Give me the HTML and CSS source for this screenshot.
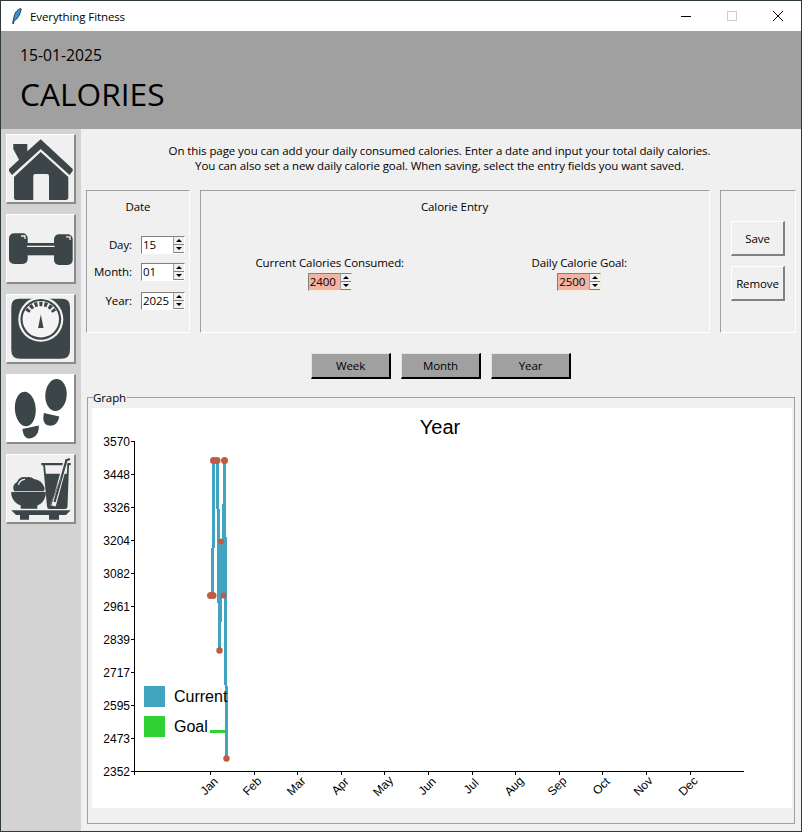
FILE: index.html
```html
<!DOCTYPE html>
<html lang="en">
<head>
<meta charset="utf-8">
<title>Everything Fitness</title>
<link rel="stylesheet" href="styles.css">
</head>
<body>
<div class="window">
  <div class="titlebar">
    <svg class="feather" viewBox="0 0 10 16"><path d="M8.8 0.5C5 1.5 2.5 5 1.8 10L1.2 12.5 0.6 15.6 1.400 15.700 2.200 12.600C5.500 11.500 7.800 7 9.300 1Z" fill="#3c8fd6" stroke="#0c2238" stroke-width="0.8"/></svg>
    <span class="app-name">Everything Fitness</span>
    <div class="controls">
      <svg class="ctl" viewBox="0 0 46 30"><path d="M18 15.500H28" stroke="#000"/></svg>
      <svg class="ctl" viewBox="0 0 46 30"><rect x="18.500" y="10.500" width="9" height="9" fill="none" stroke="#ccc"/></svg>
      <svg class="ctl" viewBox="0 0 46 30"><path d="M18 10L28 20M28 10L18 20" stroke="#000"/></svg>
    </div>
  </div>
  <header class="header">
    <div class="date">15-01-2025</div>
    <h1 class="heading">CALORIES</h1>
  </header>
  <div class="body">
    <nav class="sidebar">
      <button class="nav-btn"><svg viewBox="0 0 70 70"><path class="ic" d="M34.700 5.300 66.700 35V37L63.500 41 34.700 15 6 41 3 37V35L13 25.800 7.300 15V10H21.300V17.300Z"/><path class="ic" d="M34.700 18 62.300 43V64Q62 66 60 66H43V42Q43 40 41 40H29Q27.300 40 27.300 42V66H10Q8 66 8 64V43Z"/></svg></button>
      <button class="nav-btn"><svg viewBox="0 0 70 70"><rect class="ic" x="3" y="19.300" width="18.700" height="30.700" rx="5"/><rect class="ic" x="48" y="20.300" width="18.700" height="30.700" rx="5"/><rect class="ic" x="20" y="29" width="30" height="12.300"/><path class="hl" d="M21 32.300H48.500M15 22H19V25M60 22.800H64V26"/></svg></button>
      <button class="nav-btn"><svg viewBox="0 0 70 70"><path class="ic" d="M13 4.700H56Q64 4.700 64 12.700V56Q64 64.700 55 64.700H14Q5.300 64.700 5.300 56V12.700Q5.300 4.700 13 4.700Z"/><circle cx="34.800" cy="25.300" r="22.500" fill="#f4f4f4"/><circle cx="34.800" cy="25.300" r="20.400" class="ic"/><circle cx="34.800" cy="25.300" r="18.200" fill="#f4f4f4"/><path d="M21.400 17.600A15.500 15.500 0 0 1 48.200 17.600" fill="none" stroke="#3c4547" stroke-width="4.500" stroke-dasharray="3 1.900"/><path class="ic" d="M34.800 20.500 37.500 34H32.100Z"/></svg></button>
      <button class="nav-btn nav-white"><svg viewBox="0 0 70 70"><ellipse class="ic" cx="19.300" cy="35" rx="10.400" ry="17.300" transform="rotate(-4 19.300 35)"/><path class="ic" d="M16.300 55 32.800 51.400Q33.500 60 27 63.500 20 66.500 17.500 60Z"/><ellipse class="ic" cx="50" cy="21" rx="10.700" ry="16" transform="rotate(4 50 21)"/><path class="ic" d="M37.800 39 53.300 42.500Q52 51 45 51.800 37 51.500 37.300 44Z"/></svg></button>
      <button class="nav-btn"><svg viewBox="0 0 70 70"><path class="ic" d="M5.300 56.300H64.700L60 61H53V65.700H43V61H23V65.700H14V61H10Z"/><path class="ic" d="M5.300 38H39.700V41Q38 49 31.300 51.500V54.700H14.700V51.500Q7.500 49 5.300 41Z"/><path class="ic" d="M8 37.300Q5.500 31 11 28 13.500 22 20.500 23.300 25 22.500 28 25 36 26 38.700 34L38 37.300Z"/><path class="hl" d="M12.500 31Q13.500 25.500 19 25.300"/><path class="ic" d="M35.300 9H64.700V11.300H63L61.500 52.500Q61.300 55 59 55H43.500Q41.300 55 41 52.500L37.200 11.300H35.300Z"/><path d="M39 11.300H61.300L60.900 19.700H39.800Z" fill="#f0f0f0"/><path d="M59.500 8 47.500 52" stroke="#f0f0f0" stroke-width="4.500" fill="none"/><path d="M60.500 6 48.500 48" stroke="#3c4547" stroke-width="2.200" fill="none"/><path d="M59.500 6.500 64 5" stroke="#3c4547" stroke-width="2" fill="none"/><path d="M55 24 44 52" stroke="#6d7577" stroke-width="1" fill="none"/></svg></button>
    </nav>
    <main class="main">
      <p class="intro">On this page you can add your daily consumed calories. Enter a date and input your total daily calories.<br>You can also set a new daily calorie goal. When saving, select the entry fields you want saved.</p>
      <section class="frames">
        <div class="frame date-frame">
          <div class="frame-title">Date</div>
          <div class="date-rows">
            <div class="date-row"><span class="lbl">Day:</span><div class="spin"><span class="val">15</span><span class="arrows"><i class="up"></i><i class="down"></i></span></div></div>
            <div class="date-row"><span class="lbl">Month:</span><div class="spin"><span class="val">01</span><span class="arrows"><i class="up"></i><i class="down"></i></span></div></div>
            <div class="date-row row-year"><span class="lbl">Year:</span><div class="spin"><span class="val">2025</span><span class="arrows"><i class="up"></i><i class="down"></i></span></div></div>
          </div>
        </div>
        <div class="frame entry-frame">
          <div class="frame-title">Calorie Entry</div>
          <div class="entry-grid">
            <div class="entry-col"><span class="lbl">Current Calories Consumed:</span><div class="spin spin-red"><span class="val">2400</span><span class="arrows"><i class="up"></i><i class="down"></i></span></div></div>
            <div class="entry-col"><span class="lbl">Daily Calorie Goal:</span><div class="spin spin-red"><span class="val">2500</span><span class="arrows"><i class="up"></i><i class="down"></i></span></div></div>
          </div>
        </div>
        <div class="frame action-frame">
          <button class="act-btn">Save</button>
          <button class="act-btn">Remove</button>
        </div>
      </section>
      <div class="ranges">
        <button class="range-btn">Week</button>
        <button class="range-btn">Month</button>
        <button class="range-btn">Year</button>
      </div>
      <section class="graph">
        <span class="graph-label">Graph</span>
        <svg class="chart" viewBox="92 408 700 400" width="700" height="400">
          <text class="ct-title" x="440" y="433.500" text-anchor="middle">Year</text>
          <path class="axis" d="M134.500 441V775M131 771.500H744"/>
          <path class="axis" d="M131 441.500H134M131 474.500H134M131 507.500H134M131 540.500H134M131 573.500H134M131 606.500H134M131 639.500H134M131 672.500H134M131 705.500H134M131 738.500H134M210.500 771V775M254.500 771V775M297.500 771V775M341.500 771V775M384.500 771V775M428.500 771V775M472.500 771V775M515.500 771V775M559.500 771V775M602.500 771V775M646.500 771V775M690.500 771V775"/>
          <g class="ylab" text-anchor="end">
            <text x="130" y="446">3570</text><text x="130" y="479">3448</text><text x="130" y="512">3326</text><text x="130" y="545">3204</text><text x="130" y="578">3082</text><text x="130" y="611">2961</text><text x="130" y="644">2839</text><text x="130" y="677">2717</text><text x="130" y="710">2595</text><text x="130" y="743">2473</text><text x="130" y="776">2352</text>
          </g>
          <g class="xlab" text-anchor="middle">
            <text transform="translate(212 789) rotate(-45)">Jan</text><text transform="translate(255 789) rotate(-45)">Feb</text><text transform="translate(299 789) rotate(-45)">Mar</text><text transform="translate(343 789) rotate(-45)">Apr</text><text transform="translate(386 789) rotate(-45)">May</text><text transform="translate(430 789) rotate(-45)">Jun</text><text transform="translate(474 789) rotate(-45)">Jul</text><text transform="translate(517 789) rotate(-45)">Aug</text><text transform="translate(560 789) rotate(-45)">Sep</text><text transform="translate(604 789) rotate(-45)">Oct</text><text transform="translate(646 789) rotate(-45)">Nov</text><text transform="translate(691 789) rotate(-45)">Dec</text>
          </g>
          <rect class="c-blue" x="144" y="686" width="21" height="21"/>
          <rect class="c-green" x="144" y="716" width="21" height="21"/>
          <path class="goal" d="M210 731.500H226"/>
          <polyline class="series" points="212.500,595 214,460 217.500,460 219.500,650 221.500,541 223,595 224.500,460 226.500,758"/>
          <text class="leg" x="174" y="702">Current</text>
          <text class="leg" x="174" y="732">Goal</text>
          <g class="dots">
            <circle cx="210.500" cy="595.500" r="3.500"/><circle cx="213" cy="595.500" r="3.500"/><circle cx="213.500" cy="460.500" r="3.500"/><circle cx="217" cy="460.500" r="3.500"/><circle cx="224.500" cy="460.500" r="3.500"/><circle cx="221" cy="541.500" r="3"/><circle cx="223.500" cy="595.500" r="3"/><circle cx="219.500" cy="650.500" r="3.200"/><circle cx="226.500" cy="758.500" r="3.200"/>
          </g>
        </svg>
      </section>
    </main>
  </div>
</div>
</body>
</html>
```
FILE: styles.css
```css
* { box-sizing: border-box; }
html, body { margin: 0; padding: 0; }
body { width: 802px; height: 832px; overflow: hidden; font-family: "Open Sans", "Noto Sans", sans-serif; color: #000; }
.window { width: 802px; height: 832px; border: 1px solid #2f3b3b; display: flex; flex-direction: column; background: #f0f0f0; }
.titlebar { height: 30px; flex: none; background: #fff; display: flex; align-items: center; padding-left: 11px; }
.feather { width: 10px; height: 16px; flex: none; }
.app-name { margin-left: 8px; font-size: 11.500px; letter-spacing: -0.1px; }
.controls { margin-left: auto; display: flex; }
.ctl { width: 46px; height: 30px; display: block; }
.header { height: 98px; flex: none; background: #a0a0a0; padding: 14px 0 0 19px; }
.date { font-size: 15.700px; line-height: 20px; }
.heading { margin: 9px 0 0; font-size: 31.700px; line-height: 40px; font-weight: 400; }
.body { flex: 1; display: flex; min-height: 0; }
.sidebar { width: 80px; flex: none; background: #d3d3d3; padding: 5px 0 0 5px; display: flex; flex-direction: column; gap: 10px; }
.nav-btn { width: 70px; height: 70px; padding: 0; background: #f0f0f0; border: 1px solid; border-color: #fff #8a8a8a #8a8a8a #fff; border-right-width: 2px; border-bottom-width: 2px; display: block; }
.nav-white { background: #fff; }
.nav-btn svg { display: block; width: 70px; height: 70px; margin: -1px; }
.ic { fill: #3c4547; }
.hl { fill: none; stroke: #f0f0f0; stroke-width: 1.300; }
.main { flex: 1; min-width: 0; display: flex; flex-direction: column; padding: 14px 5px 7px 5px; }
.intro { margin: 0 0 17px; padding-right: 3px; text-align: center; font-size: 11.500px; line-height: 15px; height: 30px; letter-spacing: -0.08px; }
.frames { display: flex; gap: 10px; height: 143px; flex: none; }
.frame { height: 143px; border: 1px solid; border-color: #a0a0a0 #fff #fff #a0a0a0; }
.frame-title { text-align: center; font-size: 11.500px; line-height: 16px; letter-spacing: -0.1px; }
.date-frame { width: 104px; padding-top: 8px; }
.date-rows { margin-top: 21px; display: flex; flex-direction: column; gap: 9px; }
.date-row { display: flex; align-items: center; justify-content: flex-end; gap: 9px; padding-right: 3px; height: 18px; }
.row-year { margin-top: 2px; }
.lbl { font-size: 11.500px; line-height: 16px; letter-spacing: -0.1px; white-space: nowrap; }
.spin { width: 44px; height: 18px; background: #fff; border: 1px solid; border-color: #808080 #fff #fff #808080; display: flex; align-items: center; flex: none; }
.spin-red { background: #f4b4a4; border-right-color: #f6ead8; border-bottom-color: #f6ead8; }
.val { flex: 1; font-size: 11.500px; line-height: 16px; padding-left: 1px; letter-spacing: -0.1px; }
.arrows { width: 11px; height: 16px; background: #f0f0f0; display: flex; flex-direction: column; border-left: 1px solid #a0a0a0; }
.arrows i { flex: 1; display: flex; align-items: center; justify-content: center; border-bottom: 1px solid #808080; }
.up::before { content: ""; border: 3px solid transparent; border-top: 0; border-bottom: 3px solid #000; }
.down::before { content: ""; border: 3px solid transparent; border-bottom: 0; border-top: 3px solid #000; }
.entry-frame { width: 510px; padding: 8px 5px 0 4px; }
.entry-grid { margin-top: 40px; display: grid; grid-template-columns: 1fr 1fr; }
.entry-col { display: flex; flex-direction: column; align-items: center; gap: 2px; }
.action-frame { width: 76px; display: flex; flex-direction: column; align-items: center; padding: 30px 0 0; gap: 10px; }
.act-btn { width: 54px; height: 35px; padding: 0; background: #f0f0f0; border: 1px solid; border-color: #fff #808080 #808080 #fff; border-right-width: 2px; border-bottom-width: 2px; font: inherit; font-size: 11.500px; letter-spacing: -0.1px; }
.ranges { display: flex; justify-content: center; gap: 10px; margin-top: 20px; height: 26px; flex: none; }
.range-btn { width: 80px; height: 26px; padding: 0; background: #a0a0a0; border: 1px solid; border-color: #e3e3e3 #000 #000 #e3e3e3; border-right-width: 2px; border-bottom-width: 2px; font: inherit; font-size: 11.500px; letter-spacing: -0.1px; }
.graph { position: relative; margin: 18px 1px 0; flex: 1; min-height: 0; border: 1px solid #a0a0a0; padding: 10px 0 0 4px; }
.graph-label { position: absolute; left: 5px; top: -8px; background: #f0f0f0; font-size: 11.500px; line-height: 15px; padding: 0 1px 0 0; letter-spacing: -0.1px; }
.chart { display: block; background: #fff; }
.chart text { font-family: "Liberation Sans", Arial, sans-serif; fill: #000; }
.ct-title { font-size: 20px; }
.axis { fill: none; stroke: #000; stroke-width: 1; shape-rendering: crispEdges; }
.ylab text, .xlab text { font-size: 12px; }
.leg { font-size: 16px; }
.c-blue { fill: #41a5c0; }
.c-green { fill: #2ed232; }
.goal { stroke: #2ed232; stroke-width: 3; fill: none; shape-rendering: crispEdges; }
.series { fill: none; stroke: #41a5c0; stroke-width: 3; shape-rendering: crispEdges; }
.dots circle { fill: #bf5b45; }
.date-row { padding-right: 4px; }
```
